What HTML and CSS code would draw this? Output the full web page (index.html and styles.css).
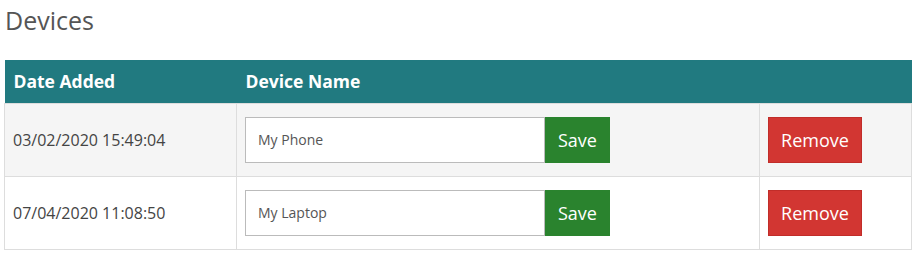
FILE: index.html
```html
<!DOCTYPE html>
<html lang="en">
<head>
  <meta charset="UTF-8" />
  <title>Devices</title>
  <link rel="stylesheet" href="styles.css">
</head>
<body>
  <main class="container">
    <h2 class="page-title">Devices</h2>
    <table class="devices">
      <thead>
        <tr>
          <th class="col-date">Date Added</th>
          <th class="col-name">Device Name</th>
          <th class="col-action"></th>
        </tr>
      </thead>
      <tbody>
        <tr>
          <td>03/02/2020 15:49:04</td>
          <td>
            <form class="rename">
              <input type="text" value="My Phone" />
              <button type="submit" class="btn btn-save">Save</button>
            </form>
          </td>
          <td><button class="btn btn-remove">Remove</button></td>
        </tr>
        <tr>
          <td>07/04/2020 11:08:50</td>
          <td>
            <form class="rename">
              <input type="text" value="My Laptop" />
              <button type="submit" class="btn btn-save">Save</button>
            </form>
          </td>
          <td><button class="btn btn-remove">Remove</button></td>
        </tr>
      </tbody>
    </table>
  </main>
</body>
</html>
```

FILE: styles.css
```css
*, *::before, *::after {
  margin: 0;
  padding: 0;
  box-sizing: border-box;
}
body {
  font-family: 'Open Sans', sans-serif;
  background: #fff;
  color: #444;
}
.container {
  width: 908px;
  margin-left: 4px;
}
.page-title {
  font-size: 25px;
  font-weight: 400;
  color: #555;
  line-height: 34px;
  padding: 3px 0 0 1px;
  margin-bottom: 23px;
}
/* Tabel */
.devices {
  width: 100%;
  border-collapse: collapse;
}
.devices th {
  background: #217a80;
  color: #fff;
  font-size: 17.5px;
  font-weight: 700;
  text-align: left;
  height: 43px;
  padding: 0 9px;
}
.col-date { width: 232px; }
.col-name { width: 523px; }
.devices td {
  border: 1px solid #ddd;
  padding: 13px 8px;
  font-size: 16px;
  height: 72px;
}
.devices tbody tr:nth-child(odd) td {
  background: #f5f5f5;
}
.rename {
  display: flex;
}
.rename input {
  width: 300px;
  height: 46px;
  border: 1px solid #bbb;
  padding: 0 12px;
  font-family: inherit;
  font-size: 14px;
  color: #555;
  background: #fff;
}
.btn {
  height: 46px;
  border: 1px solid transparent;
  color: #fff;
  font-family: inherit;
  font-size: 18px;
  padding: 0 10px;
  cursor: pointer;
}
.btn-save {
  background: #2a832e;
  width: 65px;
}
.btn-remove {
  background: #d23632;
  border-color: #c12d29;
  width: 94px;
}
```
